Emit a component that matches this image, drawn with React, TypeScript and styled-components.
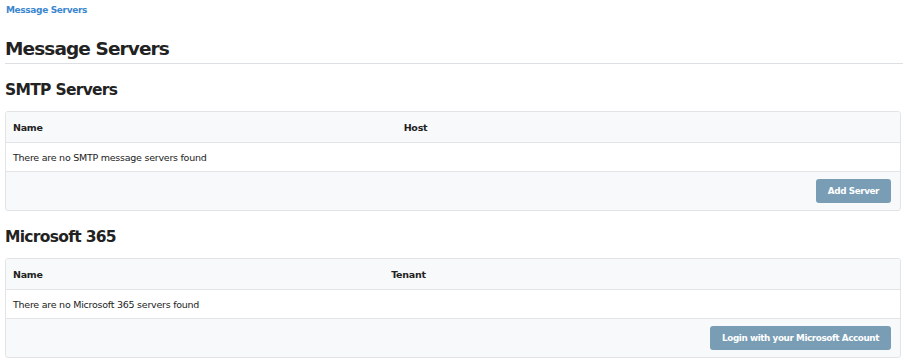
import React from 'react';
import styled, { createGlobalStyle } from 'styled-components';

const GlobalStyle = createGlobalStyle`
  body {
    margin: 0;
    background: #fff;
    font-family: 'DejaVu Sans', Verdana, sans-serif;
    color: #222;
  }
`;

const Page = styled.div`
  padding: 4px 5px 0 5px;
`;

const Breadcrumb = styled.a`
  display: block;
  font-size: 9px;
  letter-spacing: -0.35px;
  font-weight: bold;
  color: #3a87d0;
  text-decoration: none;
  line-height: 12px;
  margin-left: 1px;
`;

const PageTitle = styled.h1`
  margin: 21px 0 0 0;
  padding-bottom: 3px;
  font-size: 18.5px;
  letter-spacing: -0.9px;
  line-height: 23px;
  font-weight: bold;
  color: #222;
  border-bottom: 1px solid #dcdfe3;
`;

const SectionTitle = styled.h2`
  margin: 16px 0 10px 0;
  font-size: 15.5px;
  letter-spacing: -0.7px;
  line-height: 21px;
  font-weight: bold;
  color: #222;
`;

const Card = styled.div`
  margin-right: 2px;
  border: 1px solid #e2e4e7;
  border-radius: 3px;
  background: #f8f9fa;
  overflow: hidden;
`;

const Table = styled.table`
  width: 100%;
  border-collapse: collapse;
  font-size: 9.5px;
  letter-spacing: -0.25px;
`;

const HeadCell = styled.th<{ $width?: string }>`
  text-align: left;
  font-weight: bold;
  height: 30px;
  padding: 0 7px;
  width: ${(p) => p.$width || 'auto'};
  border-bottom: 1px solid #e2e4e7;
  background: #f8f9fa;
`;

const Cell = styled.td`
  height: 28px;
  padding: 0 7px;
  background: #fff;
  border-bottom: 1px solid #e2e4e7;
`;

const Footer = styled.div`
  display: flex;
  justify-content: flex-end;
  padding: 7px 9px 7px 8px;
`;

const Button = styled.button`
  height: 24px;
  padding: 0 12px;
  border: none;
  border-radius: 3px;
  background: #789db5;
  color: #fff;
  font-family: 'DejaVu Sans', Verdana, sans-serif;
  font-size: 8.8px;
  letter-spacing: -0.4px;
  font-weight: bold;
  cursor: pointer;
`;

type ServerSectionProps = {
  title: string;
  secondColumn: string;
  nameWidth: string;
  emptyText: string;
  action: string;
};

const ServerSection: React.FC<ServerSectionProps> = ({
  title,
  secondColumn,
  nameWidth,
  emptyText,
  action,
}) => (
  <section>
    <SectionTitle>{title}</SectionTitle>
    <Card>
      <Table>
        <thead>
          <tr>
            <HeadCell $width={nameWidth}>Name</HeadCell>
            <HeadCell>{secondColumn}</HeadCell>
          </tr>
        </thead>
        <tbody>
          <tr>
            <Cell colSpan={2}>{emptyText}</Cell>
          </tr>
        </tbody>
      </Table>
      <Footer>
        <Button>{action}</Button>
      </Footer>
    </Card>
  </section>
);

export default function App() {
  return (
    <Page>
      <GlobalStyle />
      <Breadcrumb href="#">Message Servers</Breadcrumb>
      <PageTitle>Message Servers</PageTitle>
      <ServerSection
        title="SMTP Servers"
        secondColumn="Host"
        nameWidth="43.7%"
        emptyText="There are no SMTP message servers found"
        action="Add Server"
      />
      <ServerSection
        title="Microsoft 365"
        secondColumn="Tenant"
        nameWidth="42.3%"
        emptyText="There are no Microsoft 365 servers found"
        action="Login with your Microsoft Account"
      />
    </Page>
  );
}
